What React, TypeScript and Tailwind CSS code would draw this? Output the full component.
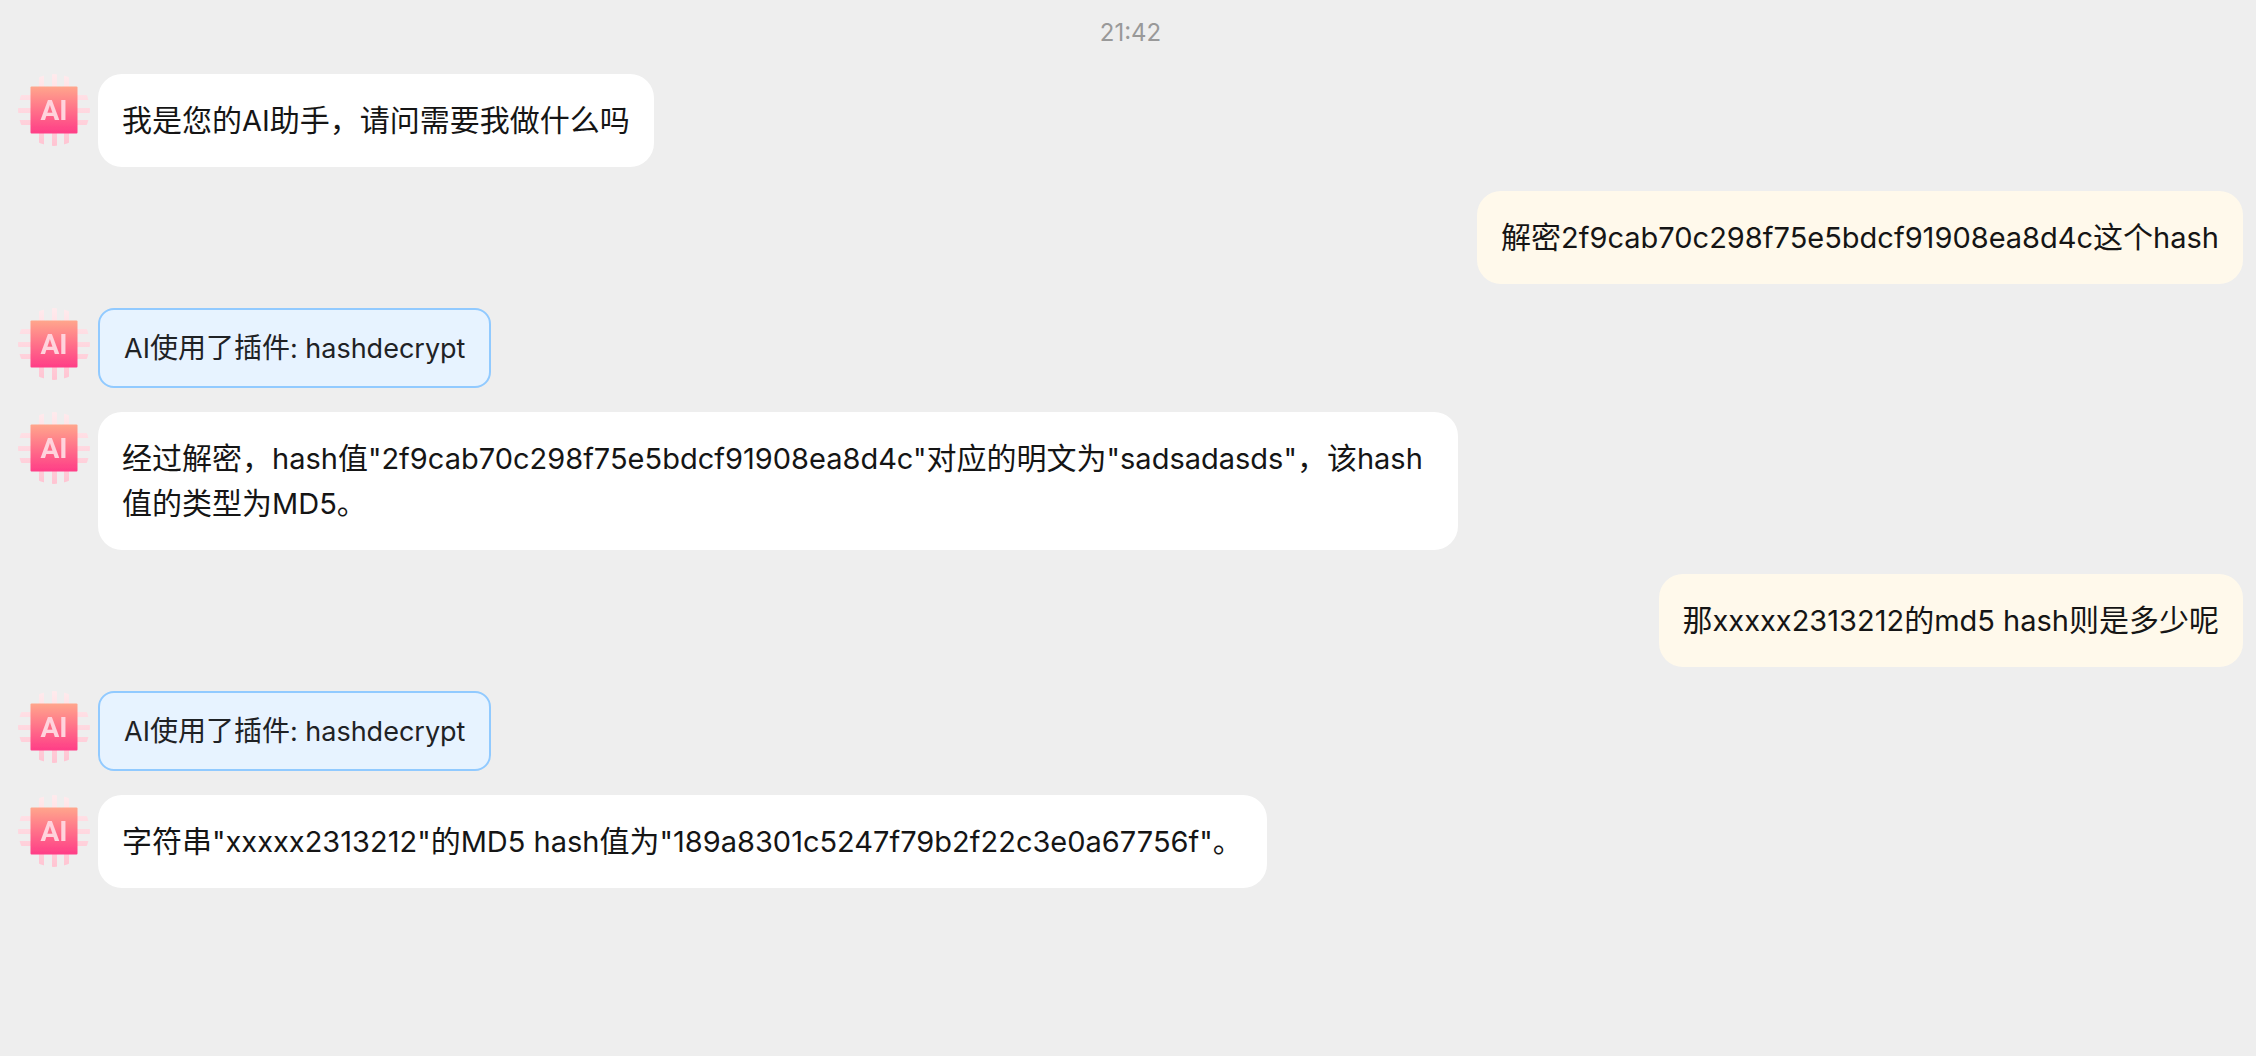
type Message = { from: "ai" | "user" | "plugin"; text: string };

const messages: Message[] = [
  { from: "ai", text: "我是您的AI助手，请问需要我做什么吗" },
  { from: "user", text: "解密2f9cab70c298f75e5bdcf91908ea8d4c这个hash" },
  { from: "plugin", text: "AI使用了插件: hashdecrypt" },
  {
    from: "ai",
    text: '经过解密，hash值"2f9cab70c298f75e5bdcf91908ea8d4c"对应的明文为"sadsadasds"，该hash值的类型为MD5。',
  },
  { from: "user", text: "那xxxxx2313212的md5 hash则是多少呢" },
  { from: "plugin", text: "AI使用了插件: hashdecrypt" },
  { from: "ai", text: '字符串"xxxxx2313212"的MD5 hash值为"189a8301c5247f79b2f22c3e0a67756f"。' },
];

function Avatar({ id }: { id: string }) {
  return (
    <svg className="size-18 shrink-0" viewBox="0 0 72 72" role="img" aria-label="AI">
      <defs>
        <linearGradient id={`chip-${id}`} x1="0" y1="0" x2="0" y2="1">
          <stop offset="0" stopColor="#ffa68c" />
          <stop offset="1" stopColor="#ff3d87" />
        </linearGradient>
        <linearGradient id={`pins-${id}`} gradientUnits="userSpaceOnUse" x1="0" y1="0" x2="0" y2="72">
          <stop offset="0" stopColor="#ffebed" />
          <stop offset="1" stopColor="#ffc4d2" />
        </linearGradient>
        <clipPath id={`round-${id}`}>
          <circle cx="36" cy="36" r="36" />
        </clipPath>
        <filter id={`soft-${id}`}>
          <feGaussianBlur stdDeviation="0.7" />
        </filter>
      </defs>
      <g clipPath={`url(#round-${id})`}>
        <g filter={`url(#soft-${id})`}>
          <g fill={`url(#pins-${id})`}>
            {[21, 34, 46].map((p) => (
              <g key={p}>
                <rect x={p} y="0" width="5" height="72" />
                <rect x="0" y={p} width="72" height="5" />
              </g>
            ))}
          </g>
          <rect x="12.5" y="12.5" width="47" height="47" rx="1" fill={`url(#chip-${id})`} />
          <text
            x="36"
            y="46"
            textAnchor="middle"
            fill="#ffd3dc"
            className="font-['Liberation_Sans_Narrow','Roboto',sans-serif] text-[28px] font-bold"
          >
            AI
          </text>
        </g>
      </g>
    </svg>
  );
}

const styles = {
  ai: {
    bubble: "max-w-[1360px] rounded-3xl bg-white p-6 text-[30px] leading-[45px]",
    latin: "text-[29px] leading-none",
  },
  user: {
    bubble: "max-w-[1360px] rounded-3xl bg-[#fff9eb] p-6 text-[30px] leading-[45px]",
    latin: "text-[29px] leading-none",
  },
  plugin: {
    bubble: "rounded-2xl border-2 border-[#91caff] bg-[#e7f3ff] p-6 text-[28px] leading-7 text-[#1f2225]",
    latin: "text-[27px] leading-6",
  },
};

// Latin runs are set one pixel smaller so that they sit evenly beside the Chinese glyphs.
function MixedText({ text, latin }: { text: string; latin: string }) {
  return text.split(/([\x20-\x7e]+)/).map((run, i) =>
    i % 2 === 1 ? (
      <span key={i} className={latin}>
        {run}
      </span>
    ) : (
      run
    ),
  );
}

export default function App() {
  return (
    <main className="min-h-screen bg-[#eeeeee] pr-[13px] pl-[18px] font-['Inter','Noto_Sans_CJK_SC',sans-serif] text-[#151515]">
      <time className="block pt-4 pb-6 text-center text-2xl leading-[34px] text-[#999999]">21:42</time>
      <ol className="flex flex-col gap-6">
        {messages.map((m, i) => (
          <li key={i} className={m.from === "user" ? "flex justify-end" : "flex items-start gap-2"}>
            {m.from !== "user" && <Avatar id={String(i)} />}
            <p className={styles[m.from].bubble}>
              <MixedText text={m.text} latin={styles[m.from].latin} />
            </p>
          </li>
        ))}
      </ol>
    </main>
  );
}
